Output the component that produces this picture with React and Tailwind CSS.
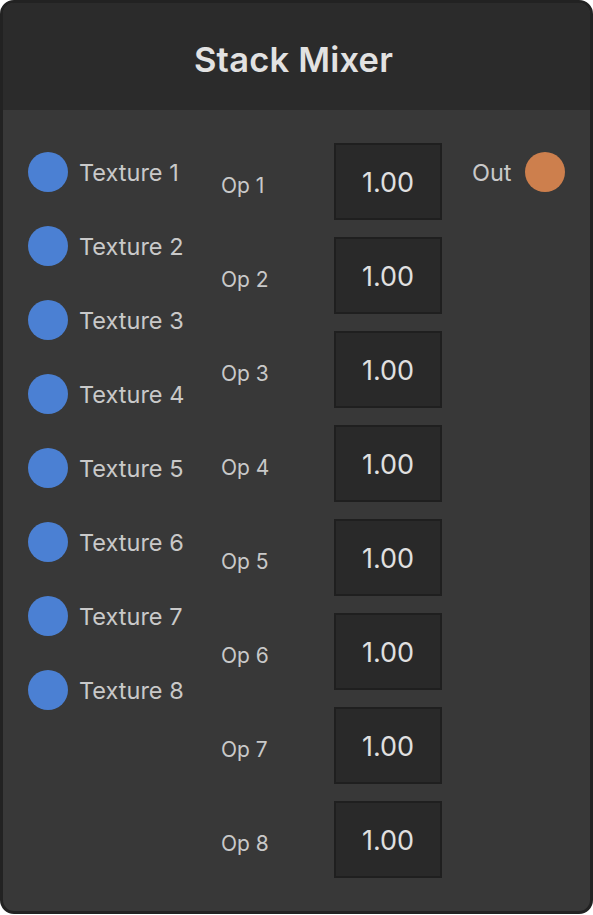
import React from 'react';

const inputs = [1, 2, 3, 4, 5, 6, 7, 8];

// Round connection socket on the node's edge
const Socket = ({ color }) => (
  <span className={`block w-10 h-10 rounded-full shrink-0 ${color}`} />
);

const App = () => {
  return (
    <div className="w-[593px] h-[915px] bg-white" style={{ fontFamily: 'Inter, "Noto Sans", sans-serif' }}>
      <div className="w-full h-[914px] flex flex-col rounded-[14px] border-[3px] border-[#222222] bg-[#383838] overflow-hidden">
        {/* Node title */}
        <div className="h-[107px] shrink-0 bg-[#2b2b2b] flex items-center justify-center pt-[6px] pr-[6px]">
          <h1 className="text-[34.5px] font-semibold text-[#e2e2e2] tracking-[0.2px]">Stack Mixer</h1>
        </div>

        {/* Node body */}
        <div className="flex-1 flex pl-[25px] pt-[33px]">
          {/* Texture inputs */}
          <div className="w-[193px] flex flex-col gap-[34px] pt-[9px]">
            {inputs.map((n) => (
              <div key={n} className="flex items-center gap-[11px] h-10">
                <Socket color="bg-[#4b80d3]" />
                <span className="text-[23.5px] text-[#c9c9c9] pt-[2px]">Texture {n}</span>
              </div>
            ))}
          </div>

          {/* Opacity fields */}
          <div className="flex flex-col gap-[17px]">
            {inputs.map((n) => (
              <div key={n} className="flex items-center">
                <span className="w-[113px] text-[21px] text-[#c9c9c9] pt-[9px]">Op {n}</span>
                <div className="w-[108px] h-[77px] border-2 border-[#1f1f1f] bg-[#292929] flex items-center justify-center pt-[3px]">
                  <span className="text-[27px] text-[#e0e0e0]">1.00</span>
                </div>
              </div>
            ))}
          </div>

          {/* Output socket */}
          <div className="pl-[30px] pt-[9px]">
            <div className="flex items-center gap-[13px] h-10">
              <span className="text-[23.5px] text-[#c9c9c9] pt-[2px]">Out</span>
              <Socket color="bg-[#cd7f4d]" />
            </div>
          </div>
        </div>
      </div>
    </div>
  );
};

export default App;
